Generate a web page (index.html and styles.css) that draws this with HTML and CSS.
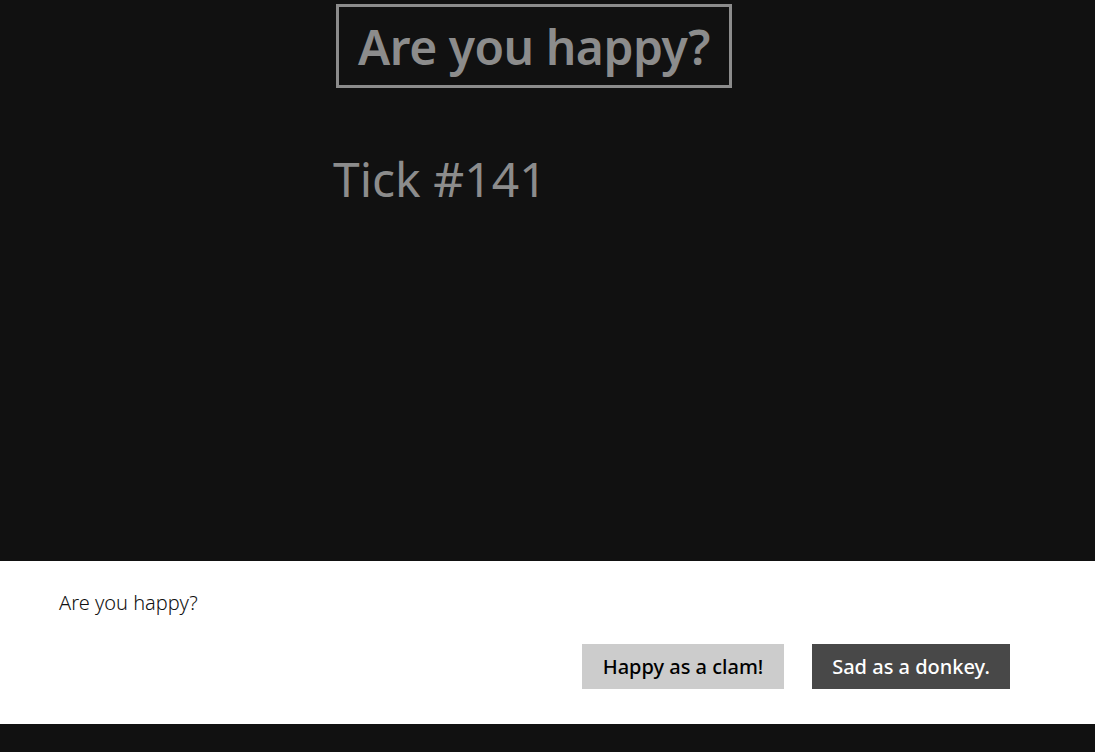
FILE: index.html
```html
<!DOCTYPE html>
<html>
<head>
<meta charset="utf-8">
<link rel="stylesheet" href="styles.css">
</head>
<body>
<div class="app">
  <main class="stage">
    <div class="title-box"><span class="title">Are you happy?</span></div>
    <div class="tick">Tick #141</div>
  </main>
  <section class="dialog">
    <div class="prompt">Are you happy?</div>
    <div class="actions">
      <button class="btn btn-light">Happy as a clam!</button>
      <button class="btn btn-dark">Sad as a donkey.</button>
    </div>
  </section>
  <div class="footer"></div>
</div>
</body>
</html>
```

FILE: styles.css
```css
html, body {
  margin: 0;
  padding: 0;
  background: #111111;
  height: 100%;
  font-family: "Noto Sans", "Open Sans", sans-serif;
}
.app {
  display: flex;
  flex-direction: column;
  height: 752px;
}
.stage {
  height: 561px;
  padding-left: 333px;
  padding-top: 4px;
  box-sizing: border-box;
  display: flex;
  flex-direction: column;
  align-items: flex-start;
}
.title-box {
  margin-left: 3px;
  width: 396px;
  height: 84px;
  box-sizing: border-box;
  border: 3px solid #8c8c8c;
  display: flex;
  align-items: center;
  justify-content: center;
}
.title {
  color: #8c8c8c;
  font-weight: 600;
  font-size: 48px;
  line-height: 1;
  letter-spacing: -0.5px;
  position: relative;
  top: 1px;
}
.tick {
  margin-top: 67px;
  color: #8c8c8c;
  font-size: 48px;
  font-weight: 400;
  line-height: 1;
}
.dialog {
  height: 163px;
  background: #ffffff;
  box-sizing: border-box;
  padding: 30px 85px 0 59px;
  display: flex;
  flex-direction: column;
}
.prompt {
  font-size: 20px;
  font-weight: 300;
  color: #111;
  line-height: 24px;
}
.actions {
  display: flex;
  justify-content: flex-end;
  gap: 28px;
  margin-top: 29px;
}
.btn {
  border: none;
  height: 45px;
  font-family: "Noto Sans", "Open Sans", sans-serif;
  font-size: 20px;
  font-weight: 500;
  padding: 0;
  line-height: 45px;
}
.btn-light {
  width: 202px;
  background: #cccccc;
  color: #000;
}
.btn-dark {
  width: 198px;
  background: #484848;
  color: #fff;
}
.footer {
  flex: 1;
  background: #111111;
}
```
